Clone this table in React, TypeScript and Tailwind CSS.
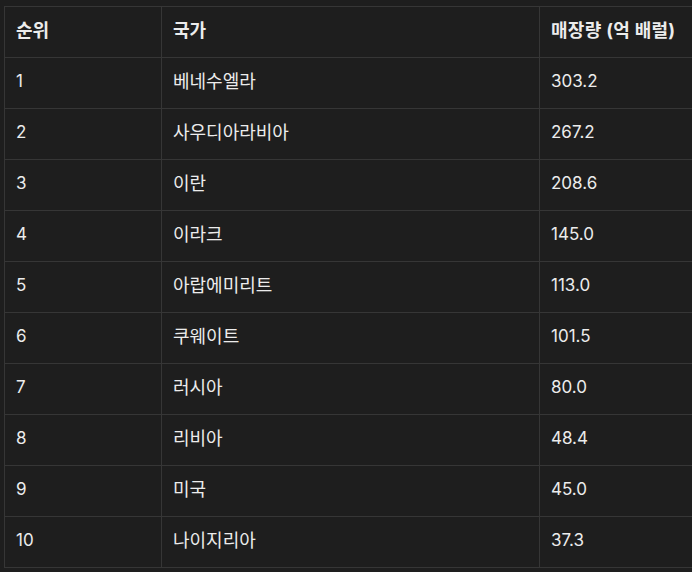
const rows: [string, string, string][] = [
  ["1", "베네수엘라", "303.2"],
  ["2", "사우디아라비아", "267.2"],
  ["3", "이란", "208.6"],
  ["4", "이라크", "145.0"],
  ["5", "아랍에미리트", "113.0"],
  ["6", "쿠웨이트", "101.5"],
  ["7", "러시아", "80.0"],
  ["8", "리비아", "48.4"],
  ["9", "미국", "45.0"],
  ["10", "나이지리아", "37.3"],
];

export default function App() {
  return (
    <div
      className="w-[692px] h-[572px] overflow-hidden bg-[#1e1e1e] pt-[6px] pl-[4px] text-[#ececec]"
      style={{ fontFamily: 'Inter, "Noto Sans CJK KR", sans-serif' }}
    >
      <table className="w-[760px] table-fixed border-collapse text-[17px]">
        <colgroup>
          <col className="w-[157px]" />
          <col className="w-[378px]" />
          <col />
        </colgroup>
        <thead>
          <tr className="h-[51px] text-[18px]">
            <th className="border border-[#363636] px-[11px] pb-[3px] text-left font-bold">순위</th>
            <th className="border border-[#363636] px-[11px] pb-[3px] text-left font-bold">국가</th>
            <th className="border border-[#363636] px-[11px] pb-[3px] text-left font-bold tracking-[0.3px]">매장량 (억 배럴)</th>
          </tr>
        </thead>
        <tbody>
          {rows.map(([rank, name, amount]) => (
            <tr key={rank} className="h-[51px]">
              <td className="border border-[#363636] px-[11px] pb-[3px]">{rank}</td>
              <td className="border border-[#363636] px-[11px] pb-[3px] text-[18px]">{name}</td>
              <td className="border border-[#363636] px-[11px] pb-[3px]">{amount}</td>
            </tr>
          ))}
        </tbody>
      </table>
    </div>
  );
}
